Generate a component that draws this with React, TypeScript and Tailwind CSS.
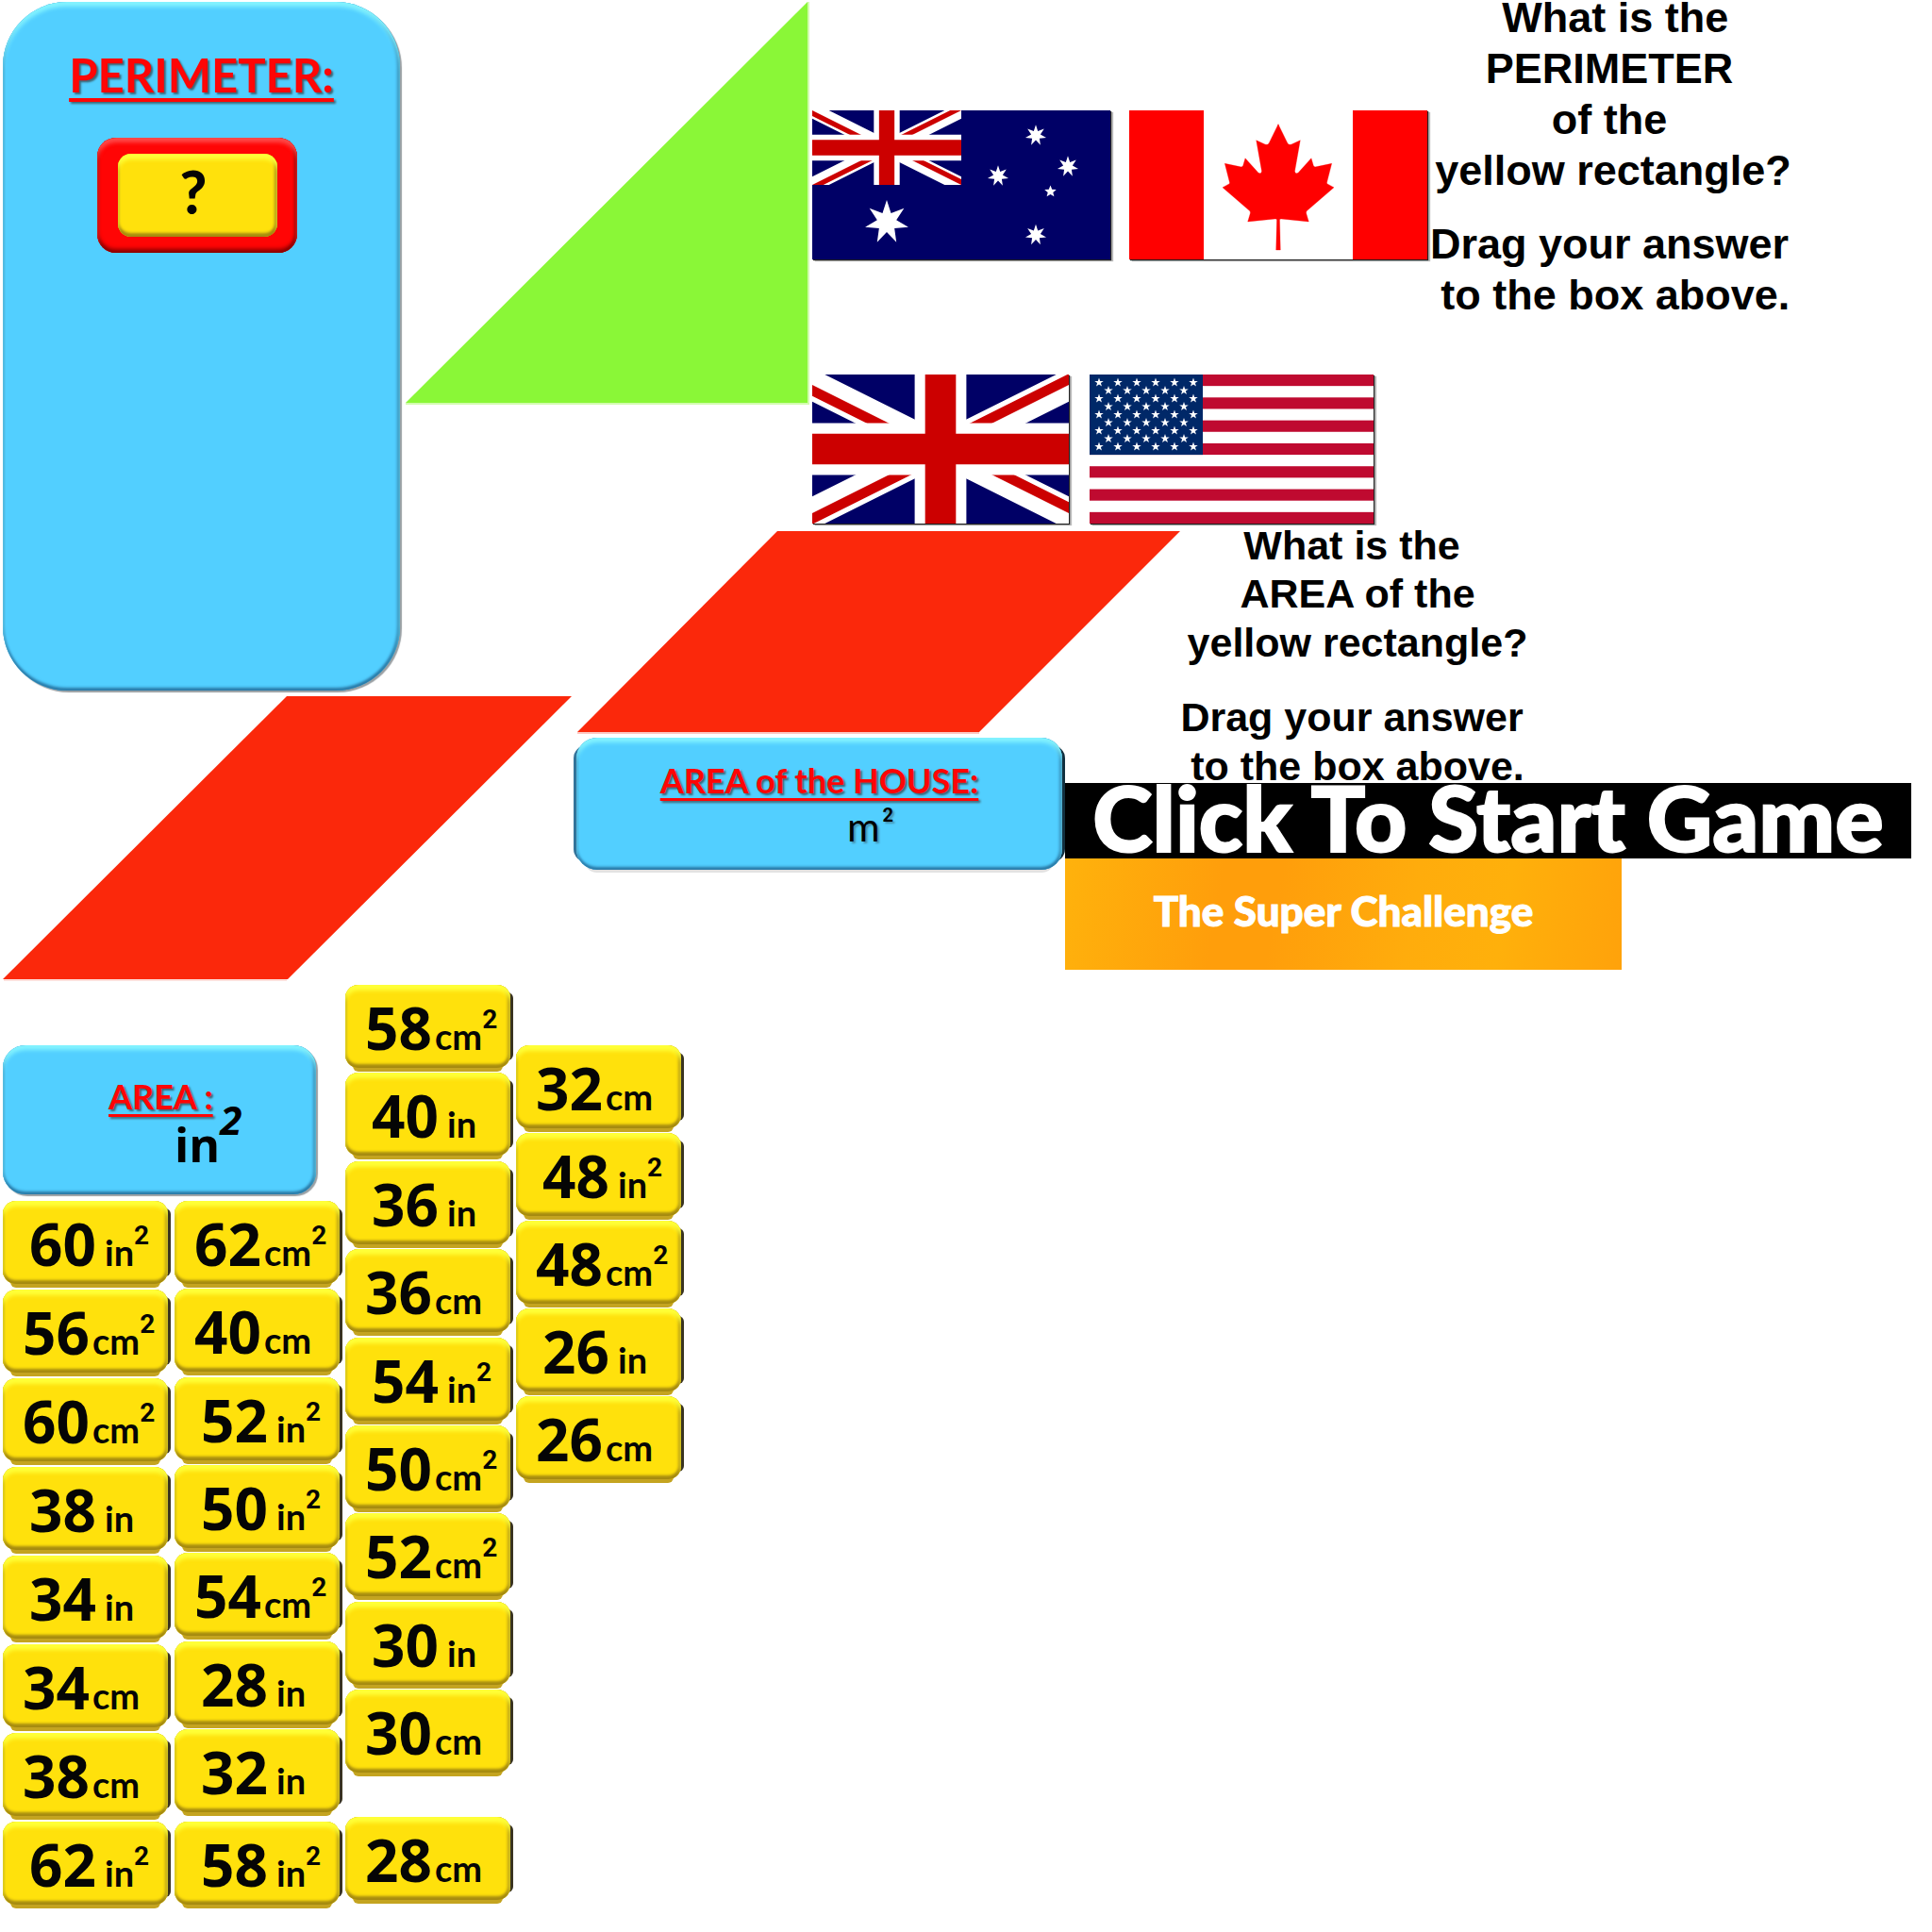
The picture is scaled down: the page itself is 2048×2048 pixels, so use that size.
import React from "react";

type Answer = { value: number; unit: "in" | "cm"; squared?: boolean };

const sq = (value: number, unit: "in" | "cm"): Answer => ({ value, unit, squared: true });
const len = (value: number, unit: "in" | "cm"): Answer => ({ value, unit });

const FIRST: Answer[] = [
  sq(60, "in"), sq(56, "cm"), sq(60, "cm"), len(38, "in"),
  len(34, "in"), len(34, "cm"), len(38, "cm"), sq(62, "in"),
];
const SECOND: Answer[] = [
  sq(62, "cm"), len(40, "cm"), sq(52, "in"), sq(50, "in"),
  sq(54, "cm"), len(28, "in"), len(32, "in"),
];
const THIRD: Answer[] = [
  sq(58, "cm"), len(40, "in"), len(36, "in"), len(36, "cm"), sq(54, "in"),
  sq(50, "cm"), sq(52, "cm"), len(30, "in"), len(30, "cm"),
];
const FOURTH: Answer[] = [len(32, "cm"), sq(48, "in"), sq(48, "cm"), len(26, "in"), len(26, "cm")];

function Tile({ value, unit, squared }: Answer) {
  const inches = unit === "in";
  return (
    <button
      type="button"
      className={`flex h-[88px] w-[175px] shrink-0 items-baseline rounded-[14px] bg-[#ffe10c] pt-px text-left font-['Lato',sans-serif] font-bold leading-[88px] text-[#050505] shadow-[inset_0_6px_4px_#ffff38,inset_0_-4px_3px_#a58a10,inset_-3px_0_3px_#b89a10,inset_2px_0_2px_#d9b90c,0_12px_0_-8px_#c4a420,11px_0_0_-8px_#3a3420] ${inches ? "pl-[28px]" : "pl-[21px]"}`}
    >
      <span className={`font-['Open_Sans',sans-serif] text-[62px] ${inches ? "w-[80px]" : "w-[74px]"}`}>{value}</span>
      <span className="text-[38px]">{unit}</span>
      {squared && (
        <sup className="static self-start pt-[20px] font-['Roboto',sans-serif] text-[28px] leading-8">2</sup>
      )}
    </button>
  );
}

function starPoints(cx: number, cy: number, r: number, tips: number, ratio: number) {
  return Array.from({ length: tips * 2 }, (_, i) => {
    const a = (Math.PI * i) / tips - Math.PI / 2;
    const d = i % 2 ? r * ratio : r;
    return `${(cx + d * Math.cos(a)).toFixed(2)},${(cy + d * Math.sin(a)).toFixed(2)}`;
  }).join(" ");
}

function UnionJack({ id }: { id: string }) {
  return (
    <>
      <clipPath id={id}>
        <path d="M30,15h30v15zv15h-30zh-30v-15zv-15h30z" />
      </clipPath>
      <path d="M0,0h60v30h-60z" fill="#006" />
      <path d="M0,0L60,30M60,0L0,30" stroke="#fff" strokeWidth="6" />
      <path d="M0,0L60,30M60,0L0,30" stroke="#c00" strokeWidth="4" clipPath={`url(#${id})`} />
      <path d="M30,0v30M0,15h60" stroke="#fff" strokeWidth="10.4" />
      <path d="M30,0v30M0,15h60" stroke="#c00" strokeWidth="6.2" />
    </>
  );
}

const FLAG = "block h-[158px] shadow-[1px_1px_1px_#222,3px_2px_1px_#bbb]";

function Australia() {
  const southern = [[237, 26.5], [197, 69.5], [271, 59.5], [237, 132]];
  return (
    <svg viewBox="0 0 316 158" className={`${FLAG} w-[316px]`} role="img" aria-label="Australia">
      <path d="M0,0h316v158H0z" fill="#006" />
      <svg width="158" height="79" viewBox="0 0 60 30"><UnionJack id="au" /></svg>
      <g fill="#fff">
        <polygon points={starPoints(79, 118.5, 23.5, 7, 0.444)} />
        {southern.map(([x, y]) => (
          <polygon key={`${x}-${y}`} points={starPoints(x, y, 11.3, 7, 0.444)} />
        ))}
        <polygon points={starPoints(252.5, 86, 6.6, 5, 0.444)} />
      </g>
    </svg>
  );
}

const HALF_LEAF =
  "M0,14.7L9.7,34.5Q11.3,37.2 14,36L23.3,31.7L17.5,64.5Q18,67.8 21,66.3L35,50.7L37.3,58.5Q38,60.2 40,59.8L56.7,56.3L51.6,76.3Q51.4,77.6 52.6,78.2L59,81.7L30.3,106.6Q29.3,107.8 29.8,109.5L32.3,118L3,115Q1.4,115 1.5,116.5L2.3,148H0z";

function Canada() {
  return (
    <svg viewBox="0 0 316 158" className={`${FLAG} w-[316px]`} role="img" aria-label="Canada">
      <path d="M0,0h316v158H0z" fill="#f00" />
      <path d="M79,0h158v158H79z" fill="#fff" />
      <g fill="#f00" stroke="#f00" strokeWidth="0.3">
        <path d={HALF_LEAF} transform="translate(158)" />
        <path d={HALF_LEAF} transform="translate(158) scale(-1 1)" />
      </g>
    </svg>
  );
}

function UnitedKingdom() {
  return (
    <svg viewBox="0 0 60 30" preserveAspectRatio="xMidYMid slice" className={`${FLAG} w-[272px]`} role="img" aria-label="United Kingdom">
      <UnionJack id="uk" />
    </svg>
  );
}

function UnitedStates() {
  const stars: [number, number][] = [];
  for (let row = 0; row < 9; row++) {
    const n = row % 2 ? 5 : 6;
    for (let i = 0; i < n; i++) stars.push([10 + i * 20 + (row % 2 ? 10 : 0), 8.5 + row * 8.5]);
  }
  return (
    <svg viewBox="0 0 301 158" className={`${FLAG} w-[301px]`} role="img" aria-label="United States">
      <path d="M0,0h301v158H0z" fill="#fff" />
      {Array.from({ length: 7 }, (_, i) => (
        <rect key={i} y={(i * 2 * 158) / 13} width="301" height={158 / 13} fill="#bf0a30" />
      ))}
      <rect width="120" height={(158 * 7) / 13} fill="#002868" />
      <g fill="#fff">
        {stars.map(([x, y]) => (
          <polygon key={`${x}-${y}`} points={starPoints(x, y, 5, 5, 0.4)} />
        ))}
      </g>
    </svg>
  );
}

const BLUE =
  "bg-[#52cfff] shadow-[inset_0_5px_4px_#84f4ff,inset_0_-3px_3px_#2a7ba8,inset_-3px_0_3px_#2f86b5,inset_2px_0_2px_#3fa5dc,2px_2px_1px_#9aa0a4]";
const BLUE_WIDE =
  "bg-[#52cfff] shadow-[inset_0_5px_4px_#84f4ff,inset_0_-3px_3px_#2a7ba8,inset_-3px_0_3px_#2f86b5,inset_2px_0_2px_#3fa5dc,11px_0_0_-8px_#12303f,-11px_0_0_-8px_#34749a,0_11px_0_-8px_#e2e2e2]";
const HEADING =
  "font-['Lato',sans-serif] font-bold text-[#ff0505] underline [text-decoration-skip-ink:none] [text-shadow:2px_2px_2px_#333a]";

export default function App() {
  return (
    <main className="min-h-screen overflow-x-hidden bg-white pb-1 font-['Liberation_Sans',Arial,sans-serif] text-black">
      <div className="grid grid-cols-[427px_184px_1fr] grid-rows-[563px_174px_306px]">
        <section className={`row-span-2 mt-[2px] mb-[5px] ml-[3px] mr-[3px] flex flex-col items-center rounded-[68px] pt-[47px] ${BLUE}`}>
          <h1 className={`${HEADING} text-[49px] leading-[60px] decoration-4 underline-offset-[6px]`}>PERIMETER:</h1>
          <div className="mt-[37px] mr-[9px] flex h-[122px] w-[212px] items-center justify-center rounded-[20px] bg-[#ff0505] shadow-[inset_0_5px_4px_#ff4a4a,inset_0_-4px_4px_#8a0000,inset_-3px_0_3px_#a00000,inset_2px_0_2px_#c40000]">
            <button
              type="button"
              className="mb-px h-[88px] w-[169px] rounded-[14px] bg-[#ffe10c] pb-2 pr-2 font-['Lato',sans-serif] text-[62px] font-black leading-[80px] text-[#050505] shadow-[inset_0_6px_4px_#ffff38,inset_0_-4px_3px_#a58a10,inset_-3px_0_3px_#a58a10,inset_2px_0_2px_#d9b90c]"
            >
              ?
            </button>
          </div>
        </section>

        <div className="col-span-2 flex">
          <svg viewBox="0 0 434 430" className="block h-[430px] w-[434px] shrink-0" aria-hidden="true">
            <path d="M429,2V427H3z" fill="#8af737" />
            <path d="M430,2V428H3" fill="none" stroke="#d3fbb0" strokeWidth="2" />
          </svg>
          <div className="flex shrink-0 flex-col gap-[122px] pt-[117px]">
            <div className="flex gap-5"><Australia /><Canada /></div>
            <div className="flex gap-[22px]"><UnitedKingdom /><UnitedStates /></div>
          </div>
          <div className="w-[386px] shrink-0 whitespace-pre text-center text-[45px] font-bold leading-[54px]">
            <p className="mb-2 leading-[38px]">{" What is the"}</p>
            <p>PERIMETER</p>
            <p>of the</p>
            <p className="pl-2">yellow rectangle?</p>
            <p className="mt-6">Drag your answer</p>
            <p>{" to the box above."}</p>
          </div>
        </div>

        <div className="col-start-3 row-span-2 row-start-2 flex">
          <div className="w-[518px] shrink-0">
            <svg viewBox="0 0 642 219" className="block h-[219px] w-[642px]" aria-hidden="true">
              <path d="M213,0H640L427,213H1z" fill="#fb280b" />
              <path d="M1,214H427" stroke="#fdc8c2" strokeWidth="2" />
            </svg>
            <section className={`flex h-[140px] w-[515px] flex-col items-center rounded-[22px] pt-[22px] ${BLUE_WIDE}`}>
              <h2 className={`${HEADING} text-[36px] leading-[46px] decoration-[3px] underline-offset-[5px]`}>AREA of the HOUSE:</h2>
              <p className="flex pl-[108px] font-['Lato',sans-serif] text-[42px] leading-[52px] [text-shadow:2px_2px_2px_#3336]">
                m<sup className="static pl-[3px] font-['Roboto',sans-serif] text-[20px] font-bold leading-7">2</sup>
              </p>
            </section>
          </div>
          <div className="mr-[22px] flex-1">
            <div className="h-[267px] w-[620px] whitespace-pre text-center text-[43px] font-bold leading-[52px]">
              <p className="mb-[10px] leading-[30px]">{"What is the "}</p>
              <p>AREA of the</p>
              <p>yellow rectangle?</p>
              <p className="mt-[27px]">{"Drag your answer "}</p>
              <p>to the box above.</p>
            </div>
            <button
              type="button"
              className="relative block h-20 w-full whitespace-nowrap bg-black pb-2 font-['Lato',sans-serif] text-[96px] font-black leading-[72px] text-white [-webkit-text-stroke:2px_white]"
            >
              Click To Start Game
            </button>
            <button
              type="button"
              className="block h-[118px] w-[590px] bg-[linear-gradient(100deg,#ffb20c_0%,#ff9e0b_28%,#ff9e0b_38%,#ffac0c_62%,#ffb00b_78%,#ffa20b_100%)] pb-2 font-['Lato',sans-serif] text-[44px] font-black leading-[110px] text-white [-webkit-text-stroke:1px_white]"
            >
              The Super Challenge
            </button>
          </div>
        </div>

        <svg viewBox="0 0 608 306" className="col-span-2 col-start-1 row-start-3 block h-[306px] w-[608px]" aria-hidden="true">
          <path d="M304,1H606L305,301H3z" fill="#fb280b" />
          <path d="M4,302H304" stroke="#fde0dc" strokeWidth="2" />
        </svg>
      </div>

      <div className="flex items-start gap-[6px] pl-[3px]">
        <div className="pt-[65px]">
          <section className={`h-[158px] w-[332px] rounded-[24px] pl-[112px] pt-[31px] ${BLUE}`}>
            <h2 className={`${HEADING} w-fit text-[36px] leading-[46px] decoration-[3px] underline-offset-[5px]`}>AREA :</h2>
            <p className="flex pl-[70px] font-['Open_Sans',sans-serif] text-[50px] font-bold leading-[56px]">
              in<sup className="static -mt-4 text-[42px] font-bold italic leading-9">2</sup>
            </p>
          </section>
          <div className="mt-[7px] flex gap-[7px]">
            <div className="flex flex-col gap-[6px]">
              {FIRST.map((a) => <Tile key={`${a.value}${a.unit}`} {...a} />)}
            </div>
            <div>
              <div className="flex h-[648px] flex-col justify-between">
                {SECOND.map((a) => <Tile key={`${a.value}${a.unit}`} {...a} />)}
              </div>
              <div className="mt-[10px]"><Tile value={58} unit="in" squared /></div>
            </div>
          </div>
        </div>
        <div className="pt-px">
          <div className="flex h-[835px] flex-col justify-between">
            {THIRD.map((a) => <Tile key={`${a.value}${a.unit}`} {...a} />)}
          </div>
          <div className="mt-[47px]"><Tile value={28} unit="cm" /></div>
        </div>
        <div className="flex flex-col gap-[5px] pt-[65px]">
          {FOURTH.map((a) => <Tile key={`${a.value}${a.unit}`} {...a} />)}
        </div>
      </div>
    </main>
  );
}
